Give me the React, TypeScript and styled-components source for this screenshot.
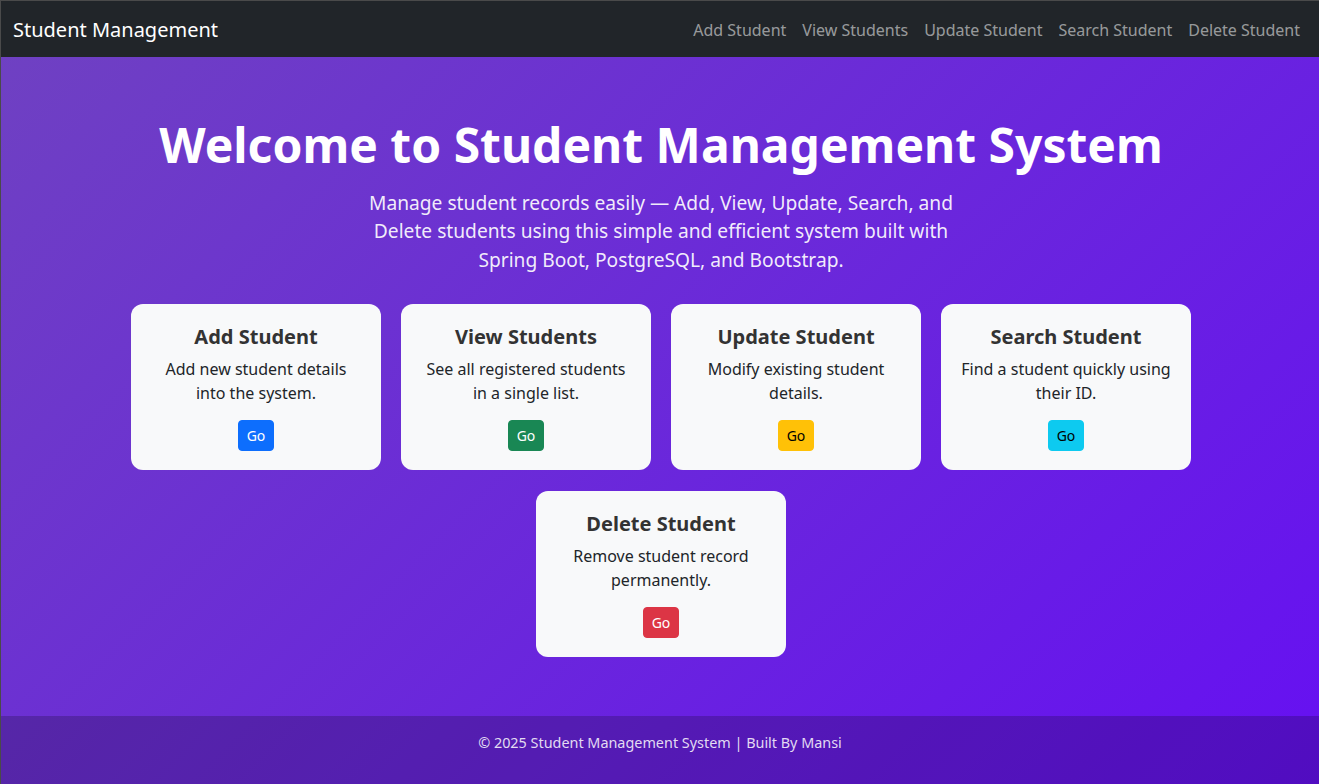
import styled, { createGlobalStyle } from "styled-components";

const GlobalStyle = createGlobalStyle`
    * {
        box-sizing: border-box;
    }
    body {
        margin: 0;
        font-family: "Noto Sans", "DejaVu Sans", sans-serif;
        font-size: 16px;
        line-height: 1.5;
        color: #212529;
    }
`;

const Page = styled.div`
    min-height: 100vh;
    display: flex;
    flex-direction: column;
    border-top: 1px solid #4a4a4a;
    border-left: 1px solid #4a4a4a;
    background: linear-gradient(135deg, #6f42c1, #6610f2);
`;

const Navbar = styled.nav`
    height: 56px;
    background-color: #212529;
    display: flex;
    align-items: center;
    justify-content: space-between;
    padding: 9px 11px 7px 12px;
`;

const Brand = styled.a`
    font-size: 20px;
    line-height: 30px;
    color: #fff;
    text-decoration: none;
`;

const NavLinks = styled.ul`
    display: flex;
    list-style: none;
    margin: 0;
    padding: 0;
`;

const NavLink = styled.a`
    display: block;
    padding: 8px;
    font-size: 16px;
    line-height: 24px;
    color: rgba(255, 255, 255, 0.55);
    text-decoration: none;
`;

const Main = styled.main`
    flex: 1;
    padding: 59px 11px 40px 13px;
    text-align: center;
    color: #fff;
`;

const Title = styled.h1`
    margin: 0 0 15px;
    font-size: 48px;
    font-weight: 700;
    line-height: 1.2;
`;

const Lead = styled.p`
    max-width: 600px;
    margin: 0 auto 29px;
    font-size: 19.2px;
    line-height: 28.8px;
    color: rgba(255, 255, 255, 0.92);
`;

const CardGrid = styled.div`
    max-width: 1116px;
    margin: 0 auto;
    display: flex;
    flex-wrap: wrap;
    justify-content: center;
    gap: 21px 20px;
`;

const Card = styled.div`
    width: 250px;
    height: 166px;
    padding: 21px 20px 19px;
    background-color: #f8f9fa;
    border-radius: 12px;
    color: #212529;
`;

const CardTitle = styled.h5`
    margin: 0 0 8px;
    font-size: 20px;
    font-weight: 700;
    line-height: 24px;
    color: #333;
`;

const CardText = styled.p`
    margin: 0 0 15px;
    font-size: 16px;
    line-height: 24px;
`;

const GoButton = styled.button<{ $bg: string; $dark?: boolean }>`
    font-family: inherit;
    font-size: 14px;
    line-height: 21px;
    padding: 4px 8px;
    border: 1px solid ${(p) => p.$bg};
    border-radius: 4px;
    background-color: ${(p) => p.$bg};
    color: ${(p) => (p.$dark ? "#000" : "#fff")};
    cursor: pointer;
`;

const Footer = styled.footer`
    padding: 16px 0 31px;
    background-color: rgba(0, 0, 0, 0.2);
    text-align: center;
    font-size: 14.4px;
    line-height: 21px;
    color: rgba(255, 255, 255, 0.85);
`;

const links = ["Add Student", "View Students", "Update Student", "Search Student", "Delete Student"];

const cards = [
    { title: "Add Student", text: "Add new student details into the system.", bg: "#0d6efd" },
    { title: "View Students", text: "See all registered students in a single list.", bg: "#198754" },
    { title: "Update Student", text: "Modify existing student details.", bg: "#ffc107", dark: true },
    { title: "Search Student", text: "Find a student quickly using their ID.", bg: "#0dcaf0", dark: true },
    { title: "Delete Student", text: "Remove student record permanently.", bg: "#dc3545" },
];

function App() {
    return (
        <Page>
            <GlobalStyle />
            <Navbar>
                <Brand href="#">Student Management</Brand>
                <NavLinks>
                    {links.map((l) => (
                        <li key={l}>
                            <NavLink href="#">{l}</NavLink>
                        </li>
                    ))}
                </NavLinks>
            </Navbar>
            <Main>
                <Title>Welcome to Student Management System</Title>
                <Lead>
                    Manage student records easily — Add, View, Update, Search, and Delete students using this
                    simple and efficient system built with Spring Boot, PostgreSQL, and Bootstrap.
                </Lead>
                <CardGrid>
                    {cards.map((c) => (
                        <Card key={c.title}>
                            <CardTitle>{c.title}</CardTitle>
                            <CardText>{c.text}</CardText>
                            <GoButton $bg={c.bg} $dark={c.dark}>Go</GoButton>
                        </Card>
                    ))}
                </CardGrid>
            </Main>
            <Footer>© 2025 Student Management System | Built By Mansi</Footer>
        </Page>
    );
}

export default App;
